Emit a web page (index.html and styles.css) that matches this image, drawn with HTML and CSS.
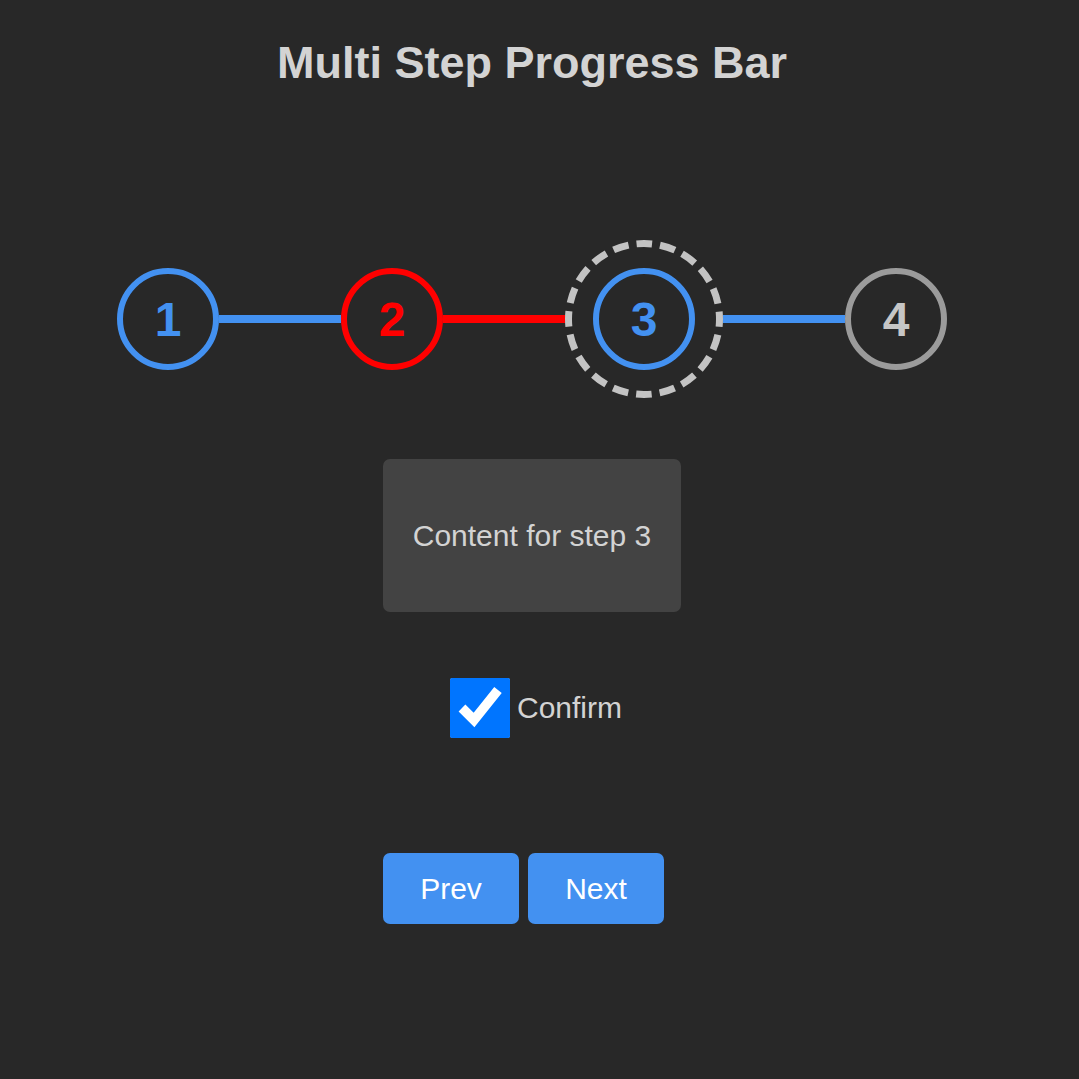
FILE: index.html
```html
<!DOCTYPE html>
<html lang="en">
<head>
<meta charset="utf-8">
<title>Multi Step Progress Bar</title>
<link rel="stylesheet" href="styles.css">
</head>
<body>
<div class="page">
  <h1 class="title">Multi Step Progress Bar</h1>

  <div class="steps">
    <div class="step step-done">1</div>
    <div class="line line-blue"></div>
    <div class="step step-error">2</div>
    <div class="line line-red"></div>
    <div class="ring">
      <svg class="ring-dash" width="158" height="158" viewBox="0 0 158 158" aria-hidden="true">
        <circle cx="79" cy="79" r="75.5" fill="none" stroke="#c3c3c3" stroke-width="7" stroke-dasharray="15.7 8" stroke-dashoffset="7.85"/>
      </svg>
      <div class="step step-current">3</div>
    </div>
    <div class="line line-blue"></div>
    <div class="step step-todo">4</div>
  </div>

  <div class="panel">
    <div class="content">Content for step 3</div>

    <label class="confirm">
      <input class="confirm-box" type="checkbox" checked>
      <span class="confirm-text">Confirm</span>
    </label>

    <div class="actions">
      <button class="btn" type="button">Prev</button>
      <button class="btn" type="button">Next</button>
    </div>
  </div>
</div>
</body>
</html>
```

FILE: styles.css
```css
html, body {
  margin: 0;
  padding: 0;
  background: #282828;
}

body {
  font-family: "Liberation Sans", Arial, sans-serif;
  color: #d3d3d3;
}

.page {
  width: 1064px;
  min-height: 1079px;
  display: flex;
  flex-direction: column;
  align-items: center;
}

.title {
  margin: 37px 0 0;
  font-size: 45px;
  line-height: 52px;
  font-weight: bold;
  color: #d3d3d3;
}

.steps {
  margin-top: 151px;
  display: flex;
  align-items: center;
}

.step {
  box-sizing: border-box;
  width: 102px;
  height: 102px;
  border: 6px solid #4391f1;
  border-radius: 50%;
  display: flex;
  align-items: center;
  justify-content: center;
  font-size: 48px;
  font-weight: bold;
  color: #4391f1;
  flex: none;
}

.step-error {
  border-color: #ff0000;
  color: #ff0000;
}

.step-todo {
  border-color: #9b9b9b;
  color: #c6c6c6;
}

.ring {
  position: relative;
  width: 158px;
  height: 158px;
  display: flex;
  align-items: center;
  justify-content: center;
  flex: none;
}

.ring-dash {
  position: absolute;
  left: 0;
  top: 0;
}

.line {
  width: 122px;
  height: 8px;
  flex: none;
}

.line-blue {
  background: #4391f1;
}

.line-red {
  background: #ff0000;
}

.panel {
  width: 298px;
  margin-top: 61px;
  display: flex;
  flex-direction: column;
}

.content {
  background: #434343;
  border-radius: 7px;
  padding: 59px 0;
  font-size: 30px;
  line-height: 35px;
  text-align: center;
  color: #d3d3d3;
}

.confirm {
  margin-top: 66px;
  padding-left: 8px;
  display: flex;
  align-items: center;
  justify-content: center;
  gap: 7px;
  font-size: 30px;
  color: #d3d3d3;
}

.confirm-box {
  width: 60px;
  height: 60px;
  margin: 0;
  accent-color: #0075ff;
}

.actions {
  margin-top: 115px;
  display: flex;
  gap: 9px;
}

.btn {
  width: 136px;
  height: 71px;
  border: none;
  border-radius: 7px;
  background: #4391f1;
  color: #ffffff;
  font-family: "Liberation Sans", Arial, sans-serif;
  font-size: 30px;
  padding: 0;
}
```
